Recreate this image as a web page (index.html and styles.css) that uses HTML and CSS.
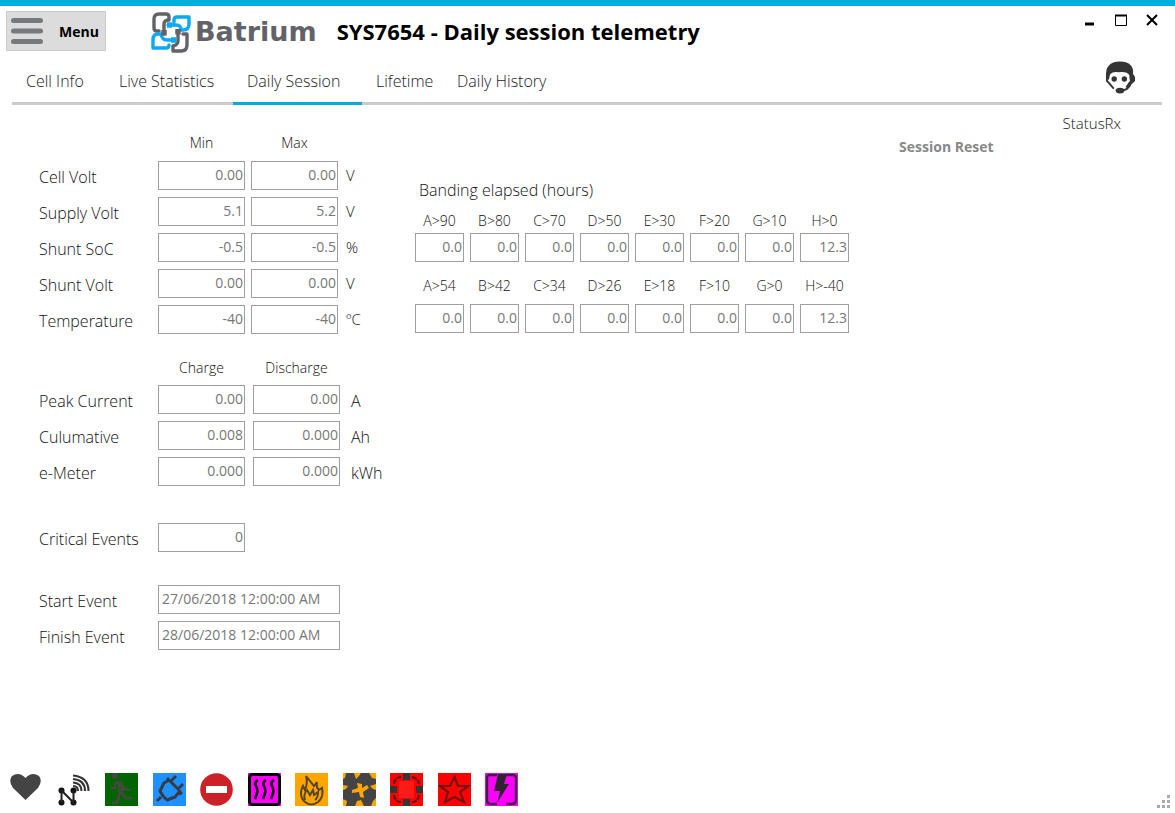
FILE: index.html
```html
<!DOCTYPE html>
<html lang="en">
<head>
<meta charset="utf-8">
<title>SYS7654 - Daily session telemetry</title>
<link rel="stylesheet" href="styles.css">
</head>
<body>
<header class="titlebar">
  <button class="menu" type="button">
    <svg class="menu-icon" viewBox="0 0 32 28" aria-hidden="true"><path d="M2.500 3.500h27M2.500 14h27M2.500 24.500h27" stroke="#757a7e" stroke-width="5" stroke-linecap="round"/></svg>
    <span>Menu</span>
  </button>
  <div class="brand">
    <svg class="brand-mark" viewBox="0 0 40 42" aria-hidden="true" fill="none" stroke-width="3.400" stroke-linejoin="round" stroke-linecap="round">
      <g stroke="#626369">
        <path d="M8 20H6Q3 20 3 17V8Q3 3 8 3H15Q18 3 18 6V9Q13 9 13 13V23"/>
        <path d="M32 23H36V34Q36 40 30 40H22V35Q27 34 27 30V20"/>
      </g>
      <g stroke="#0aa9f2">
        <path d="M23 11V9Q23 6 26 6H38V13Q38 19 32 19H30Q30 14 25 14H17"/>
        <path d="M18 34Q18 37 15 37H2V29Q2 23 7 23H10Q11 29 16 29H24"/>
      </g>
      <path d="M13 19v5.500M27 18v5.500" stroke="#626369" stroke-width="5.500" stroke-linecap="butt"/>
      <path d="M16 14h5M20 29h5" stroke="#0aa9f2" stroke-width="5.500" stroke-linecap="butt"/>
    </svg>
    <span class="brand-name">Batrium</span>
  </div>
  <h1 class="title">SYS7654 - Daily session telemetry</h1>
  <div class="window-controls">
    <button type="button" aria-label="Minimize"><svg viewBox="0 0 12 12"><path d="M1 10h9" stroke="#000" stroke-width="3"/></svg></button>
    <button type="button" aria-label="Maximize"><svg viewBox="0 0 12 12"><path d="M.5 1v10.500h11V1" fill="none" stroke="#000"/><path d="M0 1.500h12" stroke="#000" stroke-width="2"/></svg></button>
    <button type="button" aria-label="Close"><svg viewBox="0 0 12 12"><path d="M1 1l10 10M11 1L1 11" stroke="#000" stroke-width="2"/></svg></button>
  </div>
</header>

<div class="tabbar">
  <nav class="tabs">
    <a href="#cell">Cell Info</a>
    <a href="#live">Live Statistics</a>
    <a href="#daily" class="active" aria-current="page">Daily Session</a>
    <a href="#lifetime">Lifetime</a>
    <a href="#history">Daily History</a>
  </nav>
  <button class="support" type="button" aria-label="Support">
    <svg viewBox="0 0 32 34">
      <path d="M1 17Q0 1 15 1T29 14L31 17V21L28 24H26L25 15Q23 11 14 12Q7 11 5 15L4 20Z" fill="#353535"/>
      <path d="M2 15V21L4 23L9 29M27 23Q24 31 16 31M22 28L26 22" fill="none" stroke="#353535" stroke-width="2"/>
      <circle cx="9.500" cy="19" r="2.800" fill="#353535"/><circle cx="20" cy="19" r="2.800" fill="#353535"/>
      <ellipse cx="15.500" cy="31" rx="4.500" ry="3" fill="#353535"/>
    </svg>
  </button>
</div>

<main class="content">
  <div class="readings">
    <section class="group pair">
      <span></span><span class="head" id="min">Min</span><span class="head" id="max">Max</span><span></span>
      <label for="cv">Cell Volt</label><input id="cv" readonly value="0.00"><input aria-labelledby="max" readonly value="0.00"><span class="unit">V</span>
      <label for="sv">Supply Volt</label><input id="sv" readonly value="5.1"><input aria-labelledby="max" readonly value="5.2"><span class="unit">V</span>
      <label for="soc">Shunt SoC</label><input id="soc" readonly value="-0.5"><input aria-labelledby="max" readonly value="-0.5"><span class="unit">%</span>
      <label for="shv">Shunt Volt</label><input id="shv" readonly value="0.00"><input aria-labelledby="max" readonly value="0.00"><span class="unit">V</span>
      <label for="tmp">Temperature</label><input id="tmp" readonly value="-40"><input aria-labelledby="max" readonly value="-40"><span class="unit">ºC</span>
    </section>
    <section class="group energy">
      <span></span><span class="head" id="chg">Charge</span><span class="head" id="dis">Discharge</span><span></span>
      <label for="pc">Peak Current</label><input id="pc" readonly value="0.00"><input aria-labelledby="dis" readonly value="0.00"><span class="unit">A</span>
      <label for="cu">Culumative</label><input id="cu" readonly value="0.008"><input aria-labelledby="dis" readonly value="0.000"><span class="unit">Ah</span>
      <label for="em">e-Meter</label><input id="em" readonly value="0.000"><input aria-labelledby="dis" readonly value="0.000"><span class="unit">kWh</span>
    </section>
    <section class="group single">
      <label for="ce">Critical Events</label><input id="ce" readonly value="0">
    </section>
    <section class="group dates">
      <label for="se">Start Event</label><input id="se" readonly value="27/06/2018 12:00:00 AM">
      <label for="fe">Finish Event</label><input id="fe" readonly value="28/06/2018 12:00:00 AM">
    </section>
  </div>

  <section class="banding">
    <h2>Banding elapsed (hours)</h2>
    <div class="bands">
      <label>A&gt;90<input readonly value="0.0"></label>
      <label>B&gt;80<input readonly value="0.0"></label>
      <label>C&gt;70<input readonly value="0.0"></label>
      <label>D&gt;50<input readonly value="0.0"></label>
      <label>E&gt;30<input readonly value="0.0"></label>
      <label>F&gt;20<input readonly value="0.0"></label>
      <label>G&gt;10<input readonly value="0.0"></label>
      <label>H&gt;0<input readonly value="12.3"></label>
    </div>
    <div class="bands loose">
      <label>A&gt;54<input readonly value="0.0"></label>
      <label>B&gt;42<input readonly value="0.0"></label>
      <label>C&gt;34<input readonly value="0.0"></label>
      <label>D&gt;26<input readonly value="0.0"></label>
      <label>E&gt;18<input readonly value="0.0"></label>
      <label>F&gt;10<input readonly value="0.0"></label>
      <label>G&gt;0<input readonly value="0.0"></label>
      <label>H&gt;-40<input readonly value="12.3"></label>
    </div>
  </section>

  <div class="actions">
    <button class="reset" type="button">Session Reset</button>
    <span class="status">StatusRx</span>
  </div>
</main>

<footer class="footer">
  <div class="indicators">
    <svg viewBox="0 0 33 33"><path d="M15.500 27L3 15Q-2 8 2 3Q9-2 15.500 5Q22-2 29 3Q33 8 28 15Z" fill="#444"/></svg>
    <svg viewBox="0 0 33 33"><g fill="#111"><circle cx="3.500" cy="17.500" r="3"/><circle cx="15.500" cy="17.500" r="3"/><circle cx="3.500" cy="29.500" r="3"/><circle cx="15.500" cy="29.500" r="3"/></g><path d="M3.500 29.500v-12l12 12v-12" fill="none" stroke="#222" stroke-width="2"/><path d="M15 13Q20 13 20 18M15 9.500Q23.500 10 23.500 18M15 6Q27 7 27 18M15 2.500Q30.500 4 30.500 18" fill="none" stroke="#333" stroke-width="2.100"/></svg>
    <svg viewBox="0 0 33 33"><path d="M0 0h33v33H0z" fill="#006400"/><circle cx="10" cy="3" r="3.200" fill="#414a3c"/><g fill="none" stroke="#414a3c" stroke-linejoin="round"><path d="M5 15.500L10 15V10L16 9L19 16L25 17" stroke-width="2.600"/><path d="M15 9L16 19" stroke-width="5.500"/><path d="M15 18L14 23L12 30H7M16 19L21 25H27" stroke-width="3"/></g></svg>
    <svg viewBox="0 0 33 33"><path d="M0 0h33v33H0z" fill="#1e90ff"/><g fill="none" stroke="#353c44" stroke-width="3" stroke-linejoin="round"><path d="M4 28L8 24M10 23L7 18L11 10L16 7L27 18L22 24L14 27ZM17 9L23 3M24 17L30 11M16 7L14 5M26 19L29 21"/></g></svg>
    <svg viewBox="0 0 33 33"><circle cx="16.500" cy="16.500" r="16.300" fill="#cd2129"/><path d="M6 13h21v7H6z" fill="#fff"/></svg>
    <svg viewBox="0 0 33 33"><path d="M0 0h33v33H0z" fill="#f0f"/><rect x="1.500" y="1.500" width="30" height="30" rx="3" fill="none" stroke="#000" stroke-width="3"/><path d="M10 7Q6 9 8 13T9 20T7 26M18 7Q14 9 16 13T17 20T15 26M26 7Q22 9 24 13T25 20T23 26" fill="none" stroke="#100010" stroke-width="2.600"/></svg>
    <svg viewBox="0 0 33 33"><path d="M0 0h33v33H0z" fill="orange"/><path d="M10 29Q4 24 7 15L8 13L10 17Q13 10 11 3L19 13L22 9Q21 15 24 17L27 15Q29 24 23 29Q16 34 10 29Z" fill="none" stroke="#56461f" stroke-width="2"/><path d="M10 27Q8 22 12 17L15 22L18 17L19 22L23 19Q23 25 20 27" fill="none" stroke="#56461f" stroke-width="2"/></svg>
    <svg viewBox="0 0 33 33"><path d="M0 0h33v33H0z" fill="#444"/><path d="M0 0h3L2 5 0 6zM11 0h7l-2 3-3 3zM26 0h7v6l-4-1zM0 12l5 1-2 3-3 1zM33 11l-6 2 3 3 3 1zM0 26l4 2-1 5H0zM12 33l2-5 4-1 3 6zM33 25l-3 3-2 5h5zM14 10l5 1v4l5-3 2 3-6 4 1 6-4-1-1-5-7 1v-3l6-2z" fill="orange"/></svg>
    <svg viewBox="0 0 33 33"><path d="M0 0h33v33H0z" fill="#f00"/><path d="M9 8h15v17H9z" fill="#ff1a1a"/><g fill="#353535"><path d="M13 0h7v7h-7zM0 13h7v7H0zM26 13h7v7h-7zM13 26h7v7h-7z"/></g><path d="M4 11Q5 4 11 4M22 4Q28 5 29 11M4 22Q5 29 11 29M29 22Q28 29 22 29" fill="none" stroke="#5a1515" stroke-width="2.200" stroke-dasharray="5 1"/></svg>
    <svg viewBox="0 0 33 33"><path d="M0 0h33v33H0z" fill="#f00"/><path d="M16.500 4L20 13H30L22 19L26 29L16.500 24L7 29L10 19L2 13H12Z" fill="none" stroke="#751111" stroke-width="2.200"/></svg>
    <svg viewBox="0 0 33 33"><path d="M0 0h33v33H0z" fill="#f0f"/><path d="M12 2H5Q2 2 2 5V27Q2 31 6 31H12M21 2H28Q31 2 31 5V27Q31 31 27 31H21" fill="none" stroke="#402040" stroke-width="2.400"/><path d="M13 1H22L19 11H24L12 30L15 18H9Z" fill="#30232f"/></svg>
  </div>
  <svg class="grip" viewBox="0 0 14 14" aria-hidden="true"><path d="M10 0h3v3h-3zM5 5h3v3h-3zM10 5h3v3h-3zM0 10h3v3h-3zM5 10h3v3h-3zM10 10h3v3h-3z" fill="#aaa"/></svg>
</footer>
</body>
</html>
```
FILE: styles.css
```css
* {
  box-sizing: border-box;
}

body {
  margin: 0;
  min-height: 100vh;
  display: flex;
  flex-direction: column;
  border-top: 6px solid #00aedb;
  background: #fff;
  color: #111;
  font-family: "Open Sans", "Noto Sans", sans-serif;
  font-size: 16px;
  font-weight: 300;
  line-height: 20px;
}

button {
  font-family: inherit;
  border: 0;
  padding: 0;
  background: none;
}

.titlebar {
  display: flex;
  align-items: flex-start;
  padding: 5px 17px 0 6px;
}

.menu {
  display: flex;
  align-items: center;
  gap: 16px;
  width: 100px;
  height: 40px;
  padding: 0 4px;
  border: 1px solid #ccc;
  background: #dcdcdc;
  color: #000;
  font-size: 14px;
  font-weight: 700;
}

.menu-icon {
  width: 32px;
  height: 28px;
}

.brand {
  display: flex;
  align-items: center;
  gap: 4px;
  margin-left: 45px;
}

.brand-mark {
  width: 40px;
  height: 42px;
}

.brand-name {
  color: #626369;
  font-family: "DejaVu Sans", sans-serif;
  font-size: 27px;
  font-weight: 700;
  line-height: 36px;
}

.title {
  margin: 6px 0 0 20px;
  color: #000;
  font-size: 22px;
  font-weight: 700;
  line-height: 28px;
}

.window-controls {
  display: flex;
  gap: 19px;
  margin: 3px 0 0 auto;
}

.window-controls svg {
  display: block;
  width: 12px;
  height: 12px;
}

.tabbar {
  display: flex;
  align-items: flex-start;
  justify-content: space-between;
  margin: 5px 13px 0 12px;
  border-bottom: 3px solid #ccc;
}

.tabs {
  display: grid;
  grid-template-columns: 93px 128px 129px 81px auto;
  margin-bottom: -3px;
}

.tabs a {
  padding: 13px 0 11px 14px;
  border-bottom: 3px solid transparent;
  color: #222;
  text-decoration: none;
  white-space: nowrap;
}

.tabs .active {
  border-bottom-color: #00aedb;
}

.support {
  margin: 2px 26px 0 0;
}

.support svg {
  display: block;
  width: 31px;
  height: 34px;
}

.content {
  flex: 1;
  display: flex;
  align-items: flex-start;
  padding: 0 54px 0 39px;
}

.readings {
  width: 376px;
  padding-top: 28px;
}

.group {
  display: grid;
  grid-template-columns: 111px 87px 87px auto;
  grid-auto-rows: 29px;
  gap: 7px 8px;
}

.pair {
  grid-template-columns: 113px 87px 87px auto;
  grid-template-rows: 21px;
  column-gap: 6px;
  margin-bottom: 24px;
}

.energy {
  grid-template-rows: 20px;
  margin-bottom: 37px;
}

.single {
  margin-bottom: 33px;
}

.dates {
  grid-template-columns: 111px 182px;
}

.head {
  font-size: 14px;
  text-align: center;
}

.group label,
.unit {
  padding-top: 6px;
  white-space: nowrap;
}

.unit {
  padding-left: 3px;
}

.pair .unit {
  padding: 4px 0 0 2px;
  font-size: 15px;
}

input {
  width: 100%;
  min-width: 0;
  height: 29px;
  padding: 0 1px 3px 3px;
  border: 1px solid #a0a0a0;
  background: #fff;
  color: #777;
  font: 400 14px/20px "Open Sans", "Noto Sans", sans-serif;
  text-align: right;
}

.dates input {
  text-align: left;
}

.banding {
  padding-top: 75px;
}

.banding h2 {
  margin: 0 0 11px 4px;
  font-size: 16px;
  font-weight: 300;
}

.bands {
  display: grid;
  grid-template-columns: repeat(8, 49px);
  gap: 6px;
  margin-bottom: 14px;
}

.bands label {
  display: flex;
  flex-direction: column;
  align-items: center;
  gap: 2px;
  font-size: 14px;
}

.loose label {
  gap: 8px;
}

.actions {
  display: flex;
  gap: 69px;
  margin-left: auto;
  padding-top: 8px;
}

.reset {
  margin-top: 24px;
  color: #888;
  font-size: 14px;
  font-weight: 700;
  line-height: 20px;
}

.status {
  font-size: 15px;
}

.footer {
  display: flex;
  justify-content: space-between;
  align-items: flex-end;
  padding: 0 4px 4px 10px;
}

.indicators {
  display: flex;
  justify-content: space-between;
  width: 508px;
  margin-bottom: 3px;
}

.indicators svg {
  width: 33px;
  height: 33px;
}

.grip {
  width: 14px;
  height: 14px;
}
```
